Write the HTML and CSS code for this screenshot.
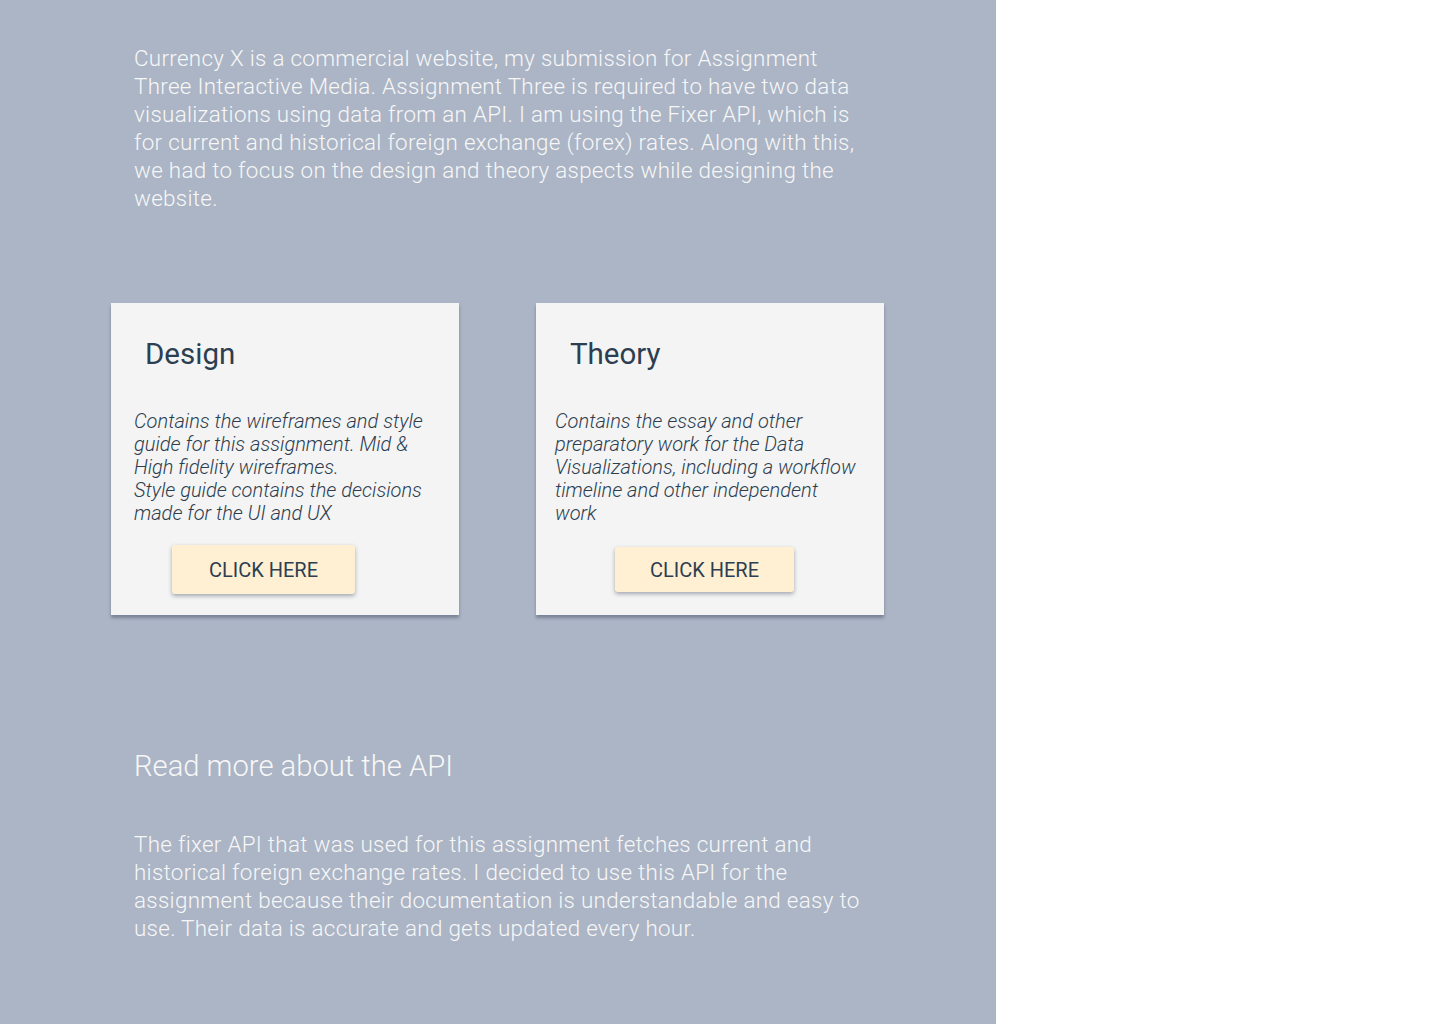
FILE: index.html
```html
<!DOCTYPE html>
<html lang="en">
<head>
<meta charset="utf-8">
<title>Currency X</title>
<link rel="stylesheet" href="styles.css">
</head>
<body>
<main class="panel">
  <p class="intro">Currency X is a commercial website, my submission for Assignment Three Interactive Media. Assignment Three is required to have two data visualizations using data from an API. I am using the Fixer API, which is for current and historical foreign exchange (forex) rates. Along with this, we had to focus on the design and theory aspects while designing the website.</p>

  <section class="cards">
    <article class="card card-design">
      <h2 class="card-title">Design</h2>
      <p class="card-text">Contains the wireframes and style guide for this assignment. Mid &amp; High fidelity wireframes.<br>Style guide contains the decisions made for the UI and UX</p>
      <button class="btn btn-design">CLICK HERE</button>
    </article>
    <article class="card card-theory">
      <h2 class="card-title">Theory</h2>
      <p class="card-text">Contains the essay and other preparatory work for the Data Visualizations, including a workflow timeline and other independent work</p>
      <button class="btn btn-theory">CLICK HERE</button>
    </article>
  </section>

  <h2 class="api-title">Read more about the API</h2>
  <p class="api-text">The fixer API that was used for this assignment fetches current and historical foreign exchange rates. I decided to use this API for the assignment because their documentation is understandable and easy to use. Their data is accurate and gets updated every hour.</p>
</main>
</body>
</html>
```

FILE: styles.css
```css
* { box-sizing: border-box; }
html, body { margin: 0; padding: 0; background: #ffffff; }
body { font-family: Roboto, "Liberation Sans", sans-serif; }

.panel {
  width: 996px;
  height: 1024px;
  background: #abb5c5;
  padding: 44px 0 0 0;
  display: flex;
  flex-direction: column;
}

.intro, .api-text {
  margin: 0 0 0 134px;
  width: 735px;
  font-weight: 300;
  font-size: 22.4px;
  letter-spacing: 0.3px;
  line-height: 28px;
  color: #f7f7f7;
}

.cards {
  display: flex;
  gap: 77px;
  margin: 91px 0 0 111px;
}

.card {
  width: 348px;
  height: 312px;
  background: #f4f4f4;
  box-shadow: 0 3px 3px rgba(60, 70, 90, 0.45);
  display: flex;
  flex-direction: column;
  color: #2c3e50;
}

.card-title {
  margin: 31px 0 0 34px;
  font-weight: 400;
  font-size: 29.5px;
  line-height: 40px;
}

.card-design .card-text { margin: 36px 0 0 23px; }
.card-theory .card-text { margin: 36px 0 0 19px; }

.card-text {
  font-style: italic;
  font-weight: 300;
  font-size: 20px;
  line-height: 23px;
  width: 303px;
}

.btn {
  font-family: Roboto, "Liberation Sans", sans-serif;
  font-weight: 400;
  font-size: 20px;
  color: #2c3e50;
  background: #fff0d4;
  border: none;
  border-radius: 3px;
  box-shadow: 0 2px 4px rgba(40, 50, 70, 0.4);
}

.btn-design {
  width: 183px;
  height: 49px;
  margin: 20px 0 0 61px;
}

.btn-theory {
  width: 179px;
  height: 45px;
  margin: 22px 0 0 79px;
}

.api-title {
  margin: 131px 0 0 134px;
  font-weight: 300;
  font-size: 29.2px;
  line-height: 40px;
  color: #f7f7f7;
}

.api-text { margin-top: 44px; }
```
